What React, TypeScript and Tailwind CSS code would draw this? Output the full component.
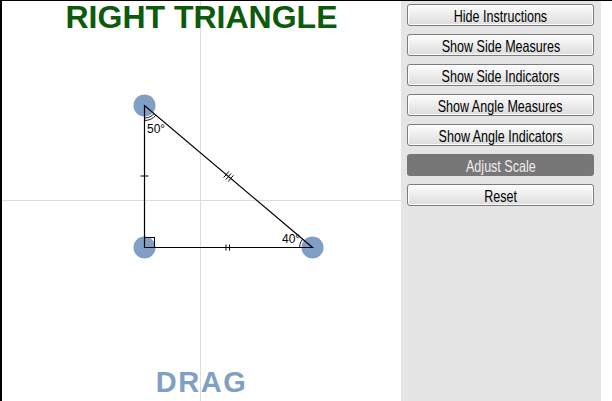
const buttons = [
  "Hide Instructions",
  "Show Side Measures",
  "Show Side Indicators",
  "Show Angle Measures",
  "Show Angle Indicators",
  "Adjust Scale",
  "Reset",
];

// triangle vertices (page coords)
const A = { x: 144.5, y: 105.5 };
const B = { x: 144.5, y: 247.5 };
const C = { x: 312.5, y: 247.5 };

const arc = (cx: number, cy: number, r: number, a1: number, a2: number) => {
  const x1 = cx + r * Math.cos(a1);
  const y1 = cy + r * Math.sin(a1);
  const x2 = cx + r * Math.cos(a2);
  const y2 = cy + r * Math.sin(a2);
  return `M${x1} ${y1} A${r} ${r} 0 0 ${a2 > a1 ? 1 : 0} ${x2} ${y2}`;
};

const Triangle = () => {
  const ux = (C.x - A.x) / Math.hypot(C.x - A.x, C.y - A.y);
  const uy = (C.y - A.y) / Math.hypot(C.x - A.x, C.y - A.y);
  const px = uy;
  const py = -ux;
  const mx = 228.5;
  const my = 176.5;
  const topDir = Math.atan2(uy, ux);
  const rightDir = Math.atan2(-uy, -ux);

  return (
    <svg
      className="absolute inset-0"
      width={399}
      height={400}
      viewBox="2 1 399 400"
    >
      {/* axes */}
      <line x1={0} y1={200.5} x2={401} y2={200.5} stroke="#dcdcdc" strokeWidth={1} />
      <line x1={200.5} y1={0} x2={200.5} y2={401} stroke="#dcdcdc" strokeWidth={1} />

      {/* drag points */}
      {[A, B, C].map((p, i) => (
        <circle key={i} cx={p.x} cy={p.y} r={11} fill="#819fc5" />
      ))}

      <polygon
        points={`${A.x},${A.y} ${B.x},${B.y} ${C.x},${C.y}`}
        fill="none"
        stroke="#000"
        strokeWidth={1.2}
      />

      {/* right angle */}
      <rect x={144.5} y={237.5} width={10} height={10} fill="none" stroke="#000" strokeWidth={1} />

      {/* side indicators */}
      <line x1={140.5} y1={176} x2={148.5} y2={176} stroke="#000" strokeWidth={1} />
      <line x1={226} y1={244.5} x2={226} y2={250.5} stroke="#000" strokeWidth={1} />
      <line x1={229.5} y1={244.5} x2={229.5} y2={250.5} stroke="#000" strokeWidth={1} />
      {[-3, 0, 3].map((o) => (
        <line
          key={o}
          x1={mx + o * ux - 4 * px}
          y1={my + o * uy - 4 * py}
          x2={mx + o * ux + 4 * px}
          y2={my + o * uy + 4 * py}
          stroke="#000"
          strokeWidth={1}
        />
      ))}

      {/* angle indicators */}
      <path d={arc(A.x, A.y, 12.5, topDir, Math.PI / 2)} fill="none" stroke="#000" strokeWidth={0.9} />
      <path d={arc(A.x, A.y, 15, topDir, Math.PI / 2)} fill="none" stroke="#000" strokeWidth={0.9} />
      <path d={arc(C.x, C.y, 13, -Math.PI, rightDir)} fill="none" stroke="#000" strokeWidth={0.9} />

      <text x={147} y={133} fontSize={12} fontFamily="'Liberation Sans', Arial, sans-serif" fill="#000">
        50°
      </text>
      <text x={282} y={243} fontSize={12} fontFamily="'Liberation Sans', Arial, sans-serif" fill="#000">
        40°
      </text>
    </svg>
  );
};

const App = () => {
  return (
    <div className="w-[612px] h-[401px] flex border-t border-black bg-white font-['Liberation_Sans',Arial,sans-serif] overflow-hidden">
      {/* drawing area */}
      <div className="relative w-[401px] h-[400px] border-l-2 border-black flex flex-col items-center justify-between">
        <Triangle />
        <h1 className="relative text-[32px] leading-none font-bold text-[#0b5b0b]">
          RIGHT TRIANGLE
        </h1>
        <div className="relative text-[29px] leading-none font-bold tracking-[1.5px] text-[#819fc5] mb-[4px]">
          DRAG
        </div>
      </div>

      {/* controls */}
      <div className="w-[200px] h-[400px] bg-[#e5e5e5] pl-[6px] pt-[3px] flex flex-col gap-2">
        {buttons.map((b) =>
          b === "Adjust Scale" ? (
            <div
              key={b}
              className="w-[187px] h-[22px] rounded-[3px] bg-[#777777] flex items-center justify-center pt-[2px]"
            >
              <span className="text-[16.5px] leading-none text-[#eeeeee] scale-x-[0.76] whitespace-nowrap">{b}</span>
            </div>
          ) : (
            <button
              key={b}
              className="w-[187px] h-[22px] rounded-[3px] border border-[#7c7c7c] bg-linear-to-b from-[#fdfdfd] to-[#dcdcdc] shadow-[inset_0_0_0_1px_#ffffff] flex items-center justify-center pt-[2px]"
            >
              <span className="text-[16.5px] leading-none text-black scale-x-[0.76] whitespace-nowrap">{b}</span>
            </button>
          )
        )}
      </div>

      <div className="flex-1 bg-white" />
    </div>
  );
};

export default App;
